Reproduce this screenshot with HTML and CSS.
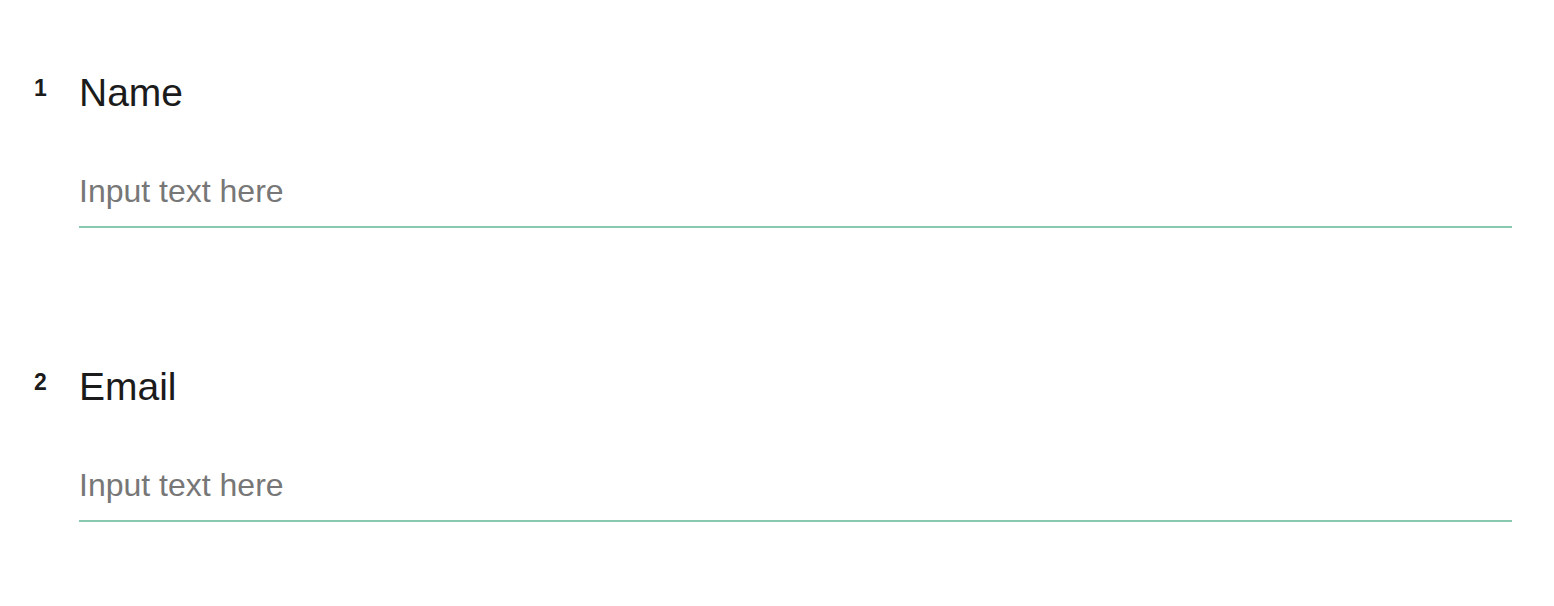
FILE: index.html
```html
<!DOCTYPE html>
<html lang="en">
<head>
<meta charset="utf-8">
<title>Form</title>
<link rel="stylesheet" href="styles.css">
</head>
<body>
<form class="form">
  <div class="question">
    <div class="num">1</div>
    <div class="body">
      <label class="label" for="name">Name</label>
      <input class="field" id="name" type="text" placeholder="Input text here">
    </div>
  </div>
  <div class="question">
    <div class="num">2</div>
    <div class="body">
      <label class="label" for="email">Email</label>
      <input class="field" id="email" type="text" placeholder="Input text here">
    </div>
  </div>
</form>
</body>
</html>
```
FILE: styles.css
```css
html, body {
  margin: 0;
  padding: 0;
  background: #ffffff;
}
body {
  font-family: "Liberation Sans", Arial, Helvetica, sans-serif;
  color: #1b1b1b;
}
.form {
  display: flex;
  flex-direction: column;
  gap: 136px;
  padding: 69.5px 42px 0 34px;
}
.question {
  display: flex;
  align-items: flex-start;
}
.num {
  width: 45px;
  flex: none;
  font-size: 23px;
  font-weight: 700;
  line-height: 1;
  margin-top: 7px;
  color: #1b1b1b;
}
.body {
  flex: 1;
  display: flex;
  flex-direction: column;
}
.label {
  display: block;
  font-size: 39px;
  line-height: 46px;
  color: #1b1b1b;
}
.field {
  display: block;
  box-sizing: content-box;
  width: 100%;
  margin: 55.4px 0 0;
  padding: 0 0 15px;
  height: 40px;
  line-height: 40px;
  font-family: inherit;
  font-size: 32px;
  color: #1b1b1b;
  border: none;
  border-bottom: 2px solid #88c9b0;
  outline: none;
  background: transparent;
}
.field::placeholder {
  color: #777777;
  opacity: 1;
}
```
